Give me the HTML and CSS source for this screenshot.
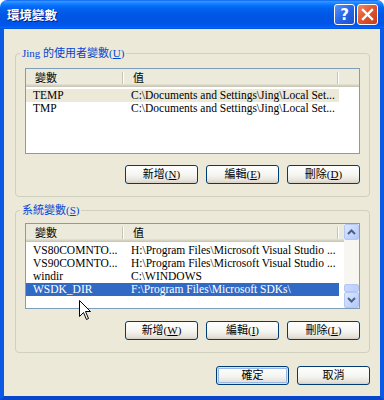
FILE: index.html
```html
<!DOCTYPE html>
<html lang="zh-Hant">
  <head>
    <meta charset="UTF-8" />
    <title>環境變數</title>
    <link rel="stylesheet" href="styles.css">
  </head>
  <body>
    <div class="window">
      <div class="titlebar">
        <span class="title">環境變數</span>
        <div class="caption">
          <span class="cbtn help">?</span>
          <span class="cbtn close">
            <svg width="13" height="13" viewBox="0 0 13 13">
              <path d="M2 2 L11 11 M11 2 L2 11" stroke="#fff" stroke-width="2.4" stroke-linecap="square" />
            </svg>
          </span>
        </div>
      </div>

      <div class="client">
        <fieldset class="group">
          <legend>Jing 的使用者變數(<u>U</u>)</legend>
          <div class="list">
            <div class="listBody">
              <div class="header">
                <div class="hcell col1">變數</div>
                <div class="hcell col2">值</div>
              </div>
              <div class="rows">
                <div class="row selGray">
                  <div class="cell col1">TEMP</div>
                  <div class="cell col2">C:\Documents and Settings\Jing\Local Set...</div>
                </div>
                <div class="row">
                  <div class="cell col1">TMP</div>
                  <div class="cell col2">C:\Documents and Settings\Jing\Local Set...</div>
                </div>
              </div>
            </div>
          </div>
          <div class="btnRow">
            <button class="btn">新增(<u>N</u>)</button>
            <button class="btn">編輯(<u>E</u>)</button>
            <button class="btn">刪除(<u>D</u>)</button>
          </div>
        </fieldset>

        <fieldset class="group sys">
          <legend>系統變數(<u>S</u>)</legend>
          <div class="list">
            <div class="listBody">
              <div class="header">
                <div class="hcell col1">變數</div>
                <div class="hcell col2">值</div>
              </div>
              <div class="rows">
                <div class="row">
                  <div class="cell col1">VS80COMNTO...</div>
                  <div class="cell col2">H:\Program Files\Microsoft Visual Studio ...</div>
                </div>
                <div class="row">
                  <div class="cell col1">VS90COMNTO...</div>
                  <div class="cell col2">H:\Program Files\Microsoft Visual Studio ...</div>
                </div>
                <div class="row">
                  <div class="cell col1">windir</div>
                  <div class="cell col2">C:\WINDOWS</div>
                </div>
                <div class="row selBlue">
                  <div class="cell col1">WSDK_DIR</div>
                  <div class="cell col2">F:\Program Files\Microsoft SDKs\</div>
                </div>
              </div>
            </div>
            <div class="scrollbar">
              <div class="sbBtn">
                <svg width="9" height="6" viewBox="0 0 9 6"><path d="M1 5 L4.5 1.5 L8 5" fill="none" stroke="#4D6185" stroke-width="2" /></svg>
              </div>
              <div class="sbTrack"><div class="sbThumb"></div></div>
              <div class="sbBtn">
                <svg width="9" height="6" viewBox="0 0 9 6"><path d="M1 1 L4.5 4.5 L8 1" fill="none" stroke="#4D6185" stroke-width="2" /></svg>
              </div>
            </div>
          </div>
          <div class="btnRow">
            <button class="btn">新增(<u>W</u>)</button>
            <button class="btn">編輯(<u>I</u>)</button>
            <button class="btn">刪除(<u>L</u>)</button>
          </div>
        </fieldset>

        <div class="btnRow dialogBtns">
          <button class="btn default">確定</button>
          <button class="btn">取消</button>
        </div>
      </div>
    </div>

    <svg class="cursor" width="13" height="21" viewBox="0 0 13 21">
      <path d="M0.5 0.5 L0.5 16.5 L4.5 12.5 L7.5 19.5 L9.5 18.5 L6.5 11.5 L11.5 11.5 Z" fill="#fff" stroke="#000" stroke-width="1" stroke-linejoin="miter" />
    </svg>
  </body>
</html>
```

FILE: styles.css
```css
* {
  margin: 0px;
  padding: 0px;
  box-sizing: border-box;
}
body {
  width: 384px;
  height: 400px;
  overflow: hidden;
  background: #ffffff;
  font-family: "Liberation Serif", "Noto Sans CJK TC", serif;
  font-size: 11px;
  color: #000;
}
.window {
  width: 384px;
  height: 400px;
  display: flex;
  flex-direction: column;
}

/* title bar */
.titlebar {
  height: 29px;
  border-radius: 7px 7px 0 0;
  background: linear-gradient(
    to bottom,
    #0058ee 0%,
    #3a93ff 4%,
    #288eff 8%,
    #127dff 14%,
    #036ffc 20%,
    #0262ee 30%,
    #0057e5 50%,
    #0054e3 70%,
    #0055eb 85%,
    #005bf5 92%,
    #026afe 96%,
    #0046c8 100%
  );
  display: flex;
  align-items: center;
  padding: 0 6px 0 7px;
}
.title {
  flex: 1;
  color: #ffffff;
  font-family: "Noto Sans CJK TC", sans-serif;
  font-weight: 700;
  font-size: 12.5px;
  text-shadow: 1px 1px #0a1883;
}
.caption {
  display: flex;
  gap: 2px;
}
.cbtn {
  width: 21px;
  height: 21px;
  border: 1px solid #ffffff;
  border-radius: 3px;
  display: flex;
  align-items: center;
  justify-content: center;
}
.help {
  background: linear-gradient(135deg, #5a95f8 0%, #2765e8 50%, #1b50d2 100%);
  color: #ffffff;
  font-family: "DejaVu Sans", sans-serif;
  font-weight: 700;
  font-size: 15px;
}
.close {
  background: linear-gradient(135deg, #f08a64 0%, #e0532c 50%, #c83d17 100%);
}

/* client area */
.client {
  flex: 1;
  background: #ece9d8;
  border: 4px solid #0b5ae6;
  border-top: 0;
  border-bottom-color: #0847cc;
  padding: 17px 10px 0 11px;
}
.group {
  border: 1px solid #d0d0bf;
  border-radius: 4px;
  padding: 8px 9px 12px 9px;
}
.group legend {
  color: #0046d5;
  font-size: 11px;
  line-height: 14px;
  padding: 0 2px;
  margin-left: -5px;
}
.sys {
  margin-top: 6px;
  padding-top: 6px;
}

/* list view */
.list {
  height: 86px;
  border: 1px solid #7f9db9;
  background: #ffffff;
  display: flex;
}
.listBody {
  flex: 1;
  overflow: hidden;
}
.header {
  display: flex;
  height: 18px;
  background: #ebeadb;
  box-shadow: inset 0 -1px #cbc7b8, inset 0 -2px #d6d2c2, inset 0 -3px #e2decd;
}
.hcell {
  line-height: 17px;
  padding-left: 9px;
  font-family: "Noto Sans CJK TC", sans-serif;
  background: linear-gradient(#c7c5b2, #c7c5b2) right 1px top 3px / 1px 12px no-repeat,
    linear-gradient(#ffffff, #ffffff) right 0 top 3px / 1px 12px no-repeat;
}
.col1 {
  width: 98px;
  flex: none;
}
.col2 {
  width: 215px;
  flex: none;
}
.rows {
  padding-top: 2px;
}
.row {
  display: flex;
  width: 313px;
  height: 13px;
  line-height: 13px;
  font-size: 11.5px;
  white-space: nowrap;
}
.cell {
  padding-left: 7px;
  overflow: hidden;
}
.selGray {
  background: #ece9d8;
}
.selBlue {
  background: #316ac5;
  color: #ffffff;
}

/* scrollbar */
.scrollbar {
  width: 15px;
  display: flex;
  flex-direction: column;
  background: #f7f6f1;
}
.sbBtn {
  height: 16px;
  background: linear-gradient(135deg, #dce6fe 0%, #c3d4fc 60%, #b4c8f6 100%);
  border: 1px solid #b4c8f6;
  border-radius: 2px;
  display: flex;
  align-items: center;
  justify-content: center;
}
.sbTrack {
  flex: 1;
  display: flex;
  flex-direction: column;
  justify-content: flex-end;
}
.sbThumb {
  height: 8px;
  background: linear-gradient(90deg, #cad8fd, #bccefb);
  border: 1px solid #b3c6f4;
  border-radius: 2px;
}

/* buttons */
.btnRow {
  display: flex;
  justify-content: flex-end;
  gap: 8px;
  margin-top: 11px;
}
.sys .btnRow {
  margin-top: 12px;
}
.dialogBtns {
  margin-top: 13px;
}
.btn {
  width: 73px;
  height: 19px;
  border: 1px solid #003c74;
  border-radius: 3px;
  background: linear-gradient(#ffffff 0%, #f4f4f0 55%, #e6e3da 85%, #d6d0c5 100%);
  font-family: "Liberation Serif", "Noto Sans CJK TC", serif;
  font-size: 11px;
  line-height: 15px;
  color: #000000;
  display: flex;
  align-items: center;
  justify-content: center;
}
.btn.default {
  box-shadow: inset 0 0 0 1px #cee7ff, inset 0 0 0 2px #98b8ea;
}

/* mouse pointer over the list */
.cursor {
  position: absolute;
  left: 79px;
  top: 300px;
}
```
